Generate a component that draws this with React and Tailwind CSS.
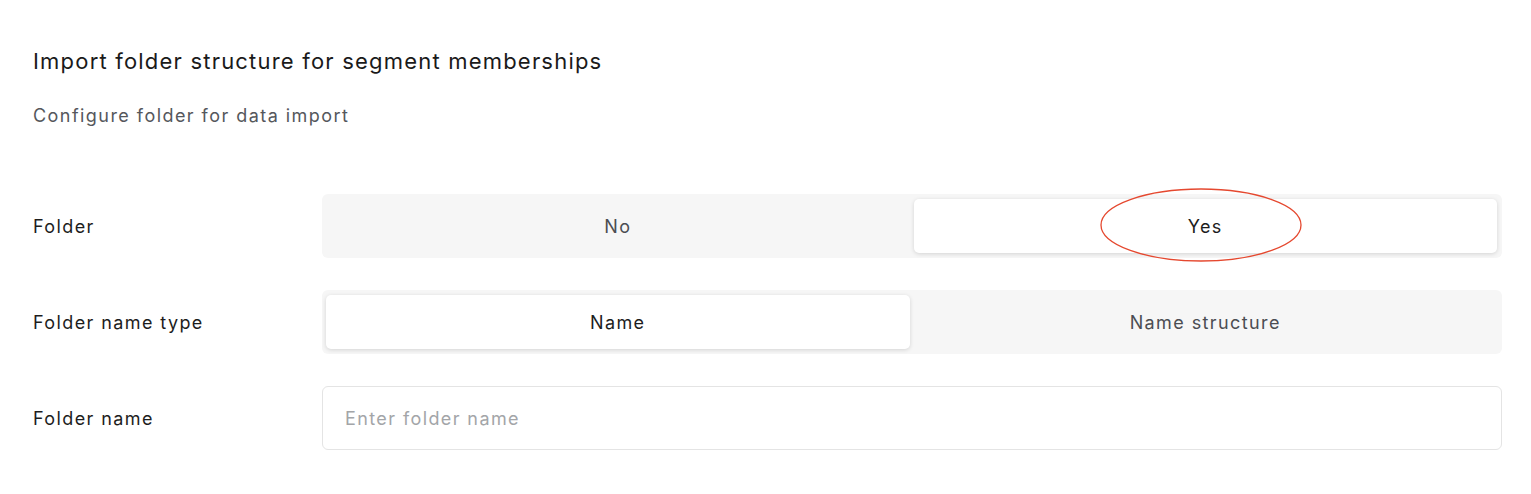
import { useState } from "react";

function Segmented({ options, value, onChange }) {
  return (
    <div className="flex h-16 flex-1 gap-1 rounded-md bg-[#f6f6f6] p-[5px] pl-1">
      {options.map((opt) => {
        const active = opt === value;
        return (
          <button
            key={opt}
            onClick={() => onChange(opt)}
            className={
              active
                ? "flex-1 rounded-[5px] bg-white text-[18px] tracking-[1.4px] text-[#1d1d1d] shadow-[0_1px_4px_rgba(0,0,0,0.14)]"
                : "flex-1 rounded-[5px] text-[18px] tracking-[1.4px] text-[#4b4d52]"
            }
          >
            {opt}
          </button>
        );
      })}
    </div>
  );
}

export default function App() {
  const [folder, setFolder] = useState("Yes");
  const [nameType, setNameType] = useState("Name");

  return (
    <div
      className="min-h-screen bg-white pl-[33px] pr-[29px] pt-[45px]"
      style={{ fontFamily: "Inter, 'Noto Sans', sans-serif" }}
    >
      <h1 className="text-[22px] leading-8 tracking-[1.2px] text-[#1a1a1a]">
        Import folder structure for segment memberships
      </h1>
      <p className="mt-[27px] text-[18px] leading-6 tracking-[1.45px] text-[#55575c]">
        Configure folder for data import
      </p>

      <div className="mt-[66px] flex flex-col gap-8">
        {/* ── Folder ───────────────────────────────── */}
        <div className="flex items-center">
          <span className="w-[289px] text-[18px] tracking-[1.4px] text-[#1d1d1d]">Folder</span>
          <div className="relative flex flex-1">
            <Segmented options={["No", "Yes"]} value={folder} onChange={setFolder} />
            <svg
              className="pointer-events-none absolute left-[777px] top-[-7px]"
              width="204"
              height="76"
              viewBox="0 0 204 76"
            >
              <ellipse cx="102" cy="38" rx="100" ry="36" fill="none" stroke="#e5482f" strokeWidth="1.3" />
            </svg>
          </div>
        </div>

        {/* ── Folder name type ─────────────────────── */}
        <div className="flex items-center">
          <span className="w-[289px] text-[18px] tracking-[1.4px] text-[#1d1d1d]">Folder name type</span>
          <Segmented
            options={["Name", "Name structure"]}
            value={nameType}
            onChange={setNameType}
          />
        </div>

        {/* ── Folder name ──────────────────────────── */}
        <div className="flex items-center">
          <span className="w-[289px] text-[18px] tracking-[1.4px] text-[#1d1d1d]">Folder name</span>
          <input
            placeholder="Enter folder name"
            className="h-16 flex-1 rounded-md border border-[#e4e4e4] px-[22px] text-[18px] tracking-[1.4px] text-[#1d1d1d] outline-none placeholder:text-[#a3a5a8]"
          />
        </div>
      </div>
    </div>
  );
}
